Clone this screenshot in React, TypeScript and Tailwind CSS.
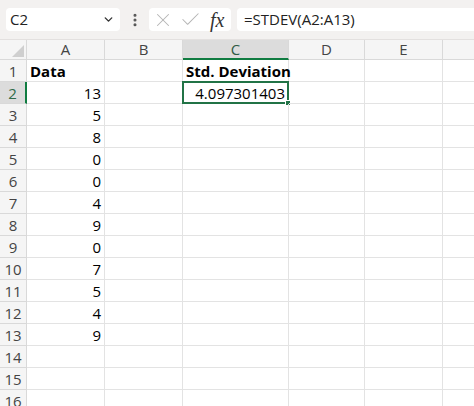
import { ChevronDown, EllipsisVertical, X, Check } from 'lucide-react'

type Cell = { v: string; bold?: boolean; left?: boolean }

const COLS = ['A', 'B', 'C', 'D', 'E', 'F']
const ROWS = 16

const CELLS: Record<string, Cell> = {
  A1: { v: 'Data', bold: true, left: true },
  C1: { v: 'Std. Deviation', bold: true, left: true },
  C2: { v: '4.097301403' },
}
const values = [13, 5, 8, 0, 0, 4, 9, 0, 7, 5, 4, 9]
values.forEach((n, i) => {
  CELLS[`A${i + 2}`] = { v: String(n) }
})

const font = { fontFamily: '"Open Sans", "Noto Sans", sans-serif' }

function FormulaBar() {
  return (
    <div className="flex h-[40px] items-center gap-[4px] border-b border-[#e3e0df] bg-[#f3f1f0] pl-[6px]">
      <div className="flex h-[23px] w-[114px] items-center justify-between rounded-[4px] bg-white pl-[4px] pr-[5px] text-[15px] text-[#222]">
        <span>C2</span>
        <ChevronDown size={13} strokeWidth={2.6} className="text-[#333]" />
      </div>
      <div className="flex w-[21px] justify-center">
        <EllipsisVertical size={16} strokeWidth={2.6} className="text-[#555]" />
      </div>
      <div className="flex h-[23px] w-[82px] items-center rounded-[4px] bg-white pl-[3px]">
        <X size={22} strokeWidth={1.1} className="text-[#b5b5b5]" />
        <Check size={23} strokeWidth={1.1} className="ml-[5px] text-[#b5b5b5]" />
        <span
          className="ml-[8px] text-[20px] italic leading-none text-[#333]"
          style={{ fontFamily: '"Liberation Serif", serif' }}
        >
          fx
        </span>
      </div>
      <div className="ml-[2px] flex h-[23px] flex-1 items-center rounded-l-[4px] bg-white pl-[7px] text-[15px] text-[#222]">
        =STDEV(A2:A13)
      </div>
    </div>
  )
}

export default function App() {
  return (
    <div className="h-[406px] w-[474px] overflow-hidden bg-white" style={font}>
      <FormulaBar />
      <div className="grid w-[521px] grid-cols-[27px_78px_78px_106px_76px_78px_78px]">
        <div className="relative h-[20px] border-b border-r border-[#d9d9d9] bg-[#f5f5f5]">
          <svg className="absolute bottom-[2px] right-[2px]" width="12" height="12" viewBox="0 0 12 12">
            <polygon points="12,0 12,12 0,12" fill="#cfcfcf" />
          </svg>
        </div>
        {COLS.map((c) =>
          c === 'C' ? (
            <div
              key={c}
              className="flex h-[20px] items-center justify-center border-b-2 border-r border-b-[#107c41] border-r-[#d9d9d9] bg-[#dcdcdc] text-[15px] text-[#2f5a43]"
            >
              {c}
            </div>
          ) : (
            <div
              key={c}
              className="flex h-[20px] items-center justify-center border-b border-r border-[#d9d9d9] bg-[#f5f5f5] text-[15px] text-[#444]"
            >
              {c === 'F' ? '' : c}
            </div>
          ),
        )}
        {Array.from({ length: ROWS }, (_, r) => r + 1).map((r) => (
          <Row key={r} r={r} />
        ))}
      </div>
    </div>
  )
}

function Row({ r }: { r: number }) {
  const selected = r === 2
  return (
    <>
      <div
        className={
          selected
            ? 'flex h-[22px] items-center justify-center border-b border-r-2 border-b-[#d9d9d9] border-r-[#107c41] bg-[#dcdcdc] pt-[2px] text-[15px] text-[#2f6b4a]'
            : 'flex h-[22px] items-center justify-center border-b border-r border-[#d9d9d9] bg-[#f5f5f5] pt-[2px] text-[15px] text-[#444]'
        }
      >
        {r}
      </div>
      {COLS.map((c) => {
        const cell = CELLS[`${c}${r}`]
        const isSel = c === 'C' && r === 2
        return (
          <div
            key={c}
            className={`relative flex h-[22px] items-center whitespace-nowrap border-b border-r border-[#e3e3e3] px-[3px] pt-[2px] text-[15px] text-black ${
              cell?.left ? 'justify-start' : 'justify-end'
            } ${cell?.bold ? 'font-bold' : ''}`}
          >
            {cell?.v}
            {isSel && (
              <>
                <div className="absolute -left-px -top-px bottom-[-1px] right-[-1px] border-2 border-[#217346]" />
                <div className="absolute bottom-[-3px] right-[-3px] h-[6px] w-[6px] border border-white bg-[#217346]" />
              </>
            )}
          </div>
        )
      })}
    </>
  )
}
